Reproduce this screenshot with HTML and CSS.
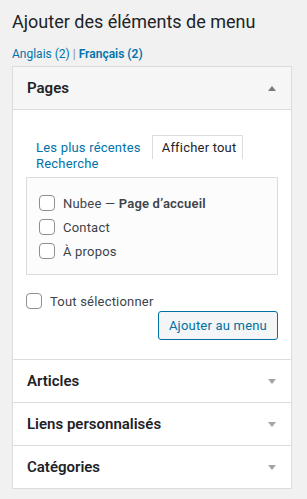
FILE: index.html
```html
<!DOCTYPE html>
<html lang="fr">
<head>
  <meta charset="UTF-8" />
  <meta name="viewport" content="width=device-width, initial-scale=1.0" />
  <title>Ajouter des éléments de menu</title>
  <link rel="stylesheet" href="styles.css">
</head>
<body>
  <h2 class="title">Ajouter des éléments de menu</h2>
  <div class="langs">
    <a href="#">Anglais (2)</a> <span class="sep">|</span> <a href="#" class="current">Français (2)</a>
  </div>

  <div class="accordion">
    <div class="section open">
      <div class="section-title">
        <span>Pages</span>
        <span class="arrow up"></span>
      </div>
      <div class="section-body">
        <div class="tabs">
          <a href="#">Les plus récentes</a><span class="tab-active">Afficher tout</span> <a href="#">Recherche</a>
        </div>
        <div class="tab-panel">
          <label class="item"><span class="box"></span><span>Nubee — <strong>Page d’accueil</strong></span></label>
          <label class="item"><span class="box"></span><span>Contact</span></label>
          <label class="item"><span class="box"></span><span>À propos</span></label>
        </div>
        <div class="actions">
          <label class="item select-all"><span class="box"></span><span>Tout sélectionner</span></label>
          <button class="add-btn">Ajouter au menu</button>
        </div>
      </div>
    </div>

    <div class="section">
      <div class="section-title">
        <span>Articles</span>
        <span class="arrow"></span>
      </div>
    </div>

    <div class="section">
      <div class="section-title">
        <span>Liens personnalisés</span>
        <span class="arrow"></span>
      </div>
    </div>

    <div class="section">
      <div class="section-title">
        <span>Catégories</span>
        <span class="arrow"></span>
      </div>
    </div>
  </div>
</body>
</html>
```

FILE: styles.css
```css
body {
  font-family: Roboto, "Noto Sans", sans-serif;
  font-size: 13px;
  letter-spacing: 0.2px;
  margin: 0;
  padding: 0 15px 0 12px;
  background: #f1f1f1;
  color: #3c434a;
}

a {
  color: #0073aa;
  text-decoration: none;
}

.title {
  font-size: 18px;
  font-weight: 400;
  letter-spacing: 0;
  color: #1d2327;
  margin: 0;
  padding-top: 10px;
  line-height: 24px;
}

.langs {
  margin-top: 11px;
  font-size: 12px;
  line-height: 18px;
  letter-spacing: 0;
}

.langs .sep {
  color: #8c8f94;
}

.langs .current {
  font-weight: 600;
}

.accordion {
  margin-top: 3px;
  border: 1px solid #dcdcde;
  background: #fff;
  box-shadow: 0 1px 1px rgba(0, 0, 0, 0.04);
}

.section + .section {
  border-top: 1px solid #dcdcde;
}

.section-title {
  height: 42px;
  padding: 0 15px 0 14px;
  display: flex;
  align-items: center;
  justify-content: space-between;
  font-size: 15px;
  font-weight: 600;
  letter-spacing: 0;
  color: #1d2327;
}

.open .section-title {
  background: #f6f6f6;
  border-bottom: 1px solid #dcdcde;
}

.arrow {
  width: 0;
  height: 0;
  border-left: 4px solid transparent;
  border-right: 4px solid transparent;
  border-top: 5px solid #a0a5aa;
}

.arrow.up {
  border-top: none;
  border-bottom: 5px solid #787c82;
}

.section-body {
  padding: 30px 13px 19px;
}

.tabs {
  padding-left: 10px;
  line-height: 16px;
}

.tab-active {
  color: #1d2327;
  background: #fff;
  border: 1px solid #dcdcde;
  border-bottom: none;
  padding: 4px 6px 4px 9px;
  margin-left: 11px;
}

.tab-panel {
  margin-top: 5px;
  border: 1px solid #dcdcde;
  background: #fcfcfc;
  padding: 13px 12px 11px;
}

.item {
  display: flex;
  align-items: center;
  height: 24px;
  color: #3c434a;
}

.item strong {
  font-weight: 600;
}

.box {
  width: 14px;
  height: 14px;
  border: 1px solid #8c8f94;
  border-radius: 4px;
  background: #fff;
  margin-right: 8px;
  flex-shrink: 0;
}

.actions {
  display: flex;
  flex-direction: column;
  align-items: flex-end;
  margin-top: 14px;
}

.select-all {
  align-self: stretch;
}

.add-btn {
  margin-top: -2px;
  height: 29px;
  padding: 0 10px;
  font-family: inherit;
  font-size: 13px;
  letter-spacing: 0.2px;
  color: #0071a1;
  background: #f3f5f6;
  border: 1px solid #0071a1;
  border-radius: 3px;
}
```
